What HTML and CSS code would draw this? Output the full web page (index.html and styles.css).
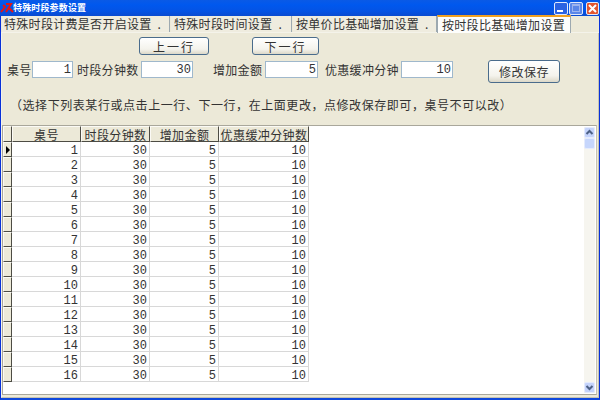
FILE: index.html
```html
<!DOCTYPE html>
<html lang="zh">
<head>
<meta charset="utf-8">
<title>特殊时段参数设置</title>
<link rel="stylesheet" href="styles.css">
</head>
<body>
<div class="window">
  <div class="titlebar">
    <svg class="appicon" width="14" height="14" viewBox="0 0 14 14"><path d="M1 11 L5 6 L3 4 M6 3 L11 3 L6 11 M9 7 L13 11" fill="none" stroke="#e01818" stroke-width="2"/></svg>
    <span class="title">特殊时段参数设置</span>
    <div class="wbtns">
      <span class="wbtn min"><svg width="12" height="12" viewBox="0 0 12 12"><rect x="2" y="8" width="6" height="2" fill="#fff"/></svg></span>
      <span class="wbtn off"><svg width="12" height="12" viewBox="0 0 12 12"><rect x="2.5" y="2.5" width="7" height="7" fill="none" stroke="#9db4ee"/><rect x="2" y="2" width="8" height="2" fill="#9db4ee"/></svg></span>
      <span class="wbtn close"><svg width="11" height="11" viewBox="0 0 11 11"><path d="M2 2 L9 9 M9 2 L2 9" stroke="#fff" stroke-width="2"/></svg></span>
    </div>
  </div>
  <div class="tabs">
    <span class="tab t1">特殊时段计费是否开启设置 .</span>
    <span class="tab t2">特殊时段时间设置 .</span>
    <span class="tab t3">按单价比基础增加设置 .</span>
    <span class="tab active">按时段比基础增加设置</span>
  </div>
  <div class="panel">
    <div class="navrow">
      <button class="btn prev">上一行</button>
      <button class="btn next">下一行</button>
    </div>
    <div class="fields">
      <label class="lbl l1">桌号</label><span class="inp i1">1</span>
      <label class="lbl l2">时段分钟数</label><span class="inp i2">30</span>
      <label class="lbl l3">增加金额</label><span class="inp i3">5</span>
      <label class="lbl l4">优惠缓冲分钟</label><span class="inp i4">10</span>
      <button class="btn save">修改保存</button>
    </div>
    <p class="note">（选择下列表某行或点击上一行、下一行，在上面更改，点修改保存即可，桌号不可以改）</p>
    <div class="grid">
      <div class="gridbody">
        <table>
          <thead><tr><th class="ind"></th><th class="c1">桌号</th><th class="c2">时段分钟数</th><th class="c3">增加金额</th><th class="c4">优惠缓冲分钟数</th></tr></thead>
          <tbody>
            <tr><td class="ind cur"></td><td>1</td><td>30</td><td>5</td><td>10</td></tr>
            <tr><td class="ind"></td><td>2</td><td>30</td><td>5</td><td>10</td></tr>
            <tr><td class="ind"></td><td>3</td><td>30</td><td>5</td><td>10</td></tr>
            <tr><td class="ind"></td><td>4</td><td>30</td><td>5</td><td>10</td></tr>
            <tr><td class="ind"></td><td>5</td><td>30</td><td>5</td><td>10</td></tr>
            <tr><td class="ind"></td><td>6</td><td>30</td><td>5</td><td>10</td></tr>
            <tr><td class="ind"></td><td>7</td><td>30</td><td>5</td><td>10</td></tr>
            <tr><td class="ind"></td><td>8</td><td>30</td><td>5</td><td>10</td></tr>
            <tr><td class="ind"></td><td>9</td><td>30</td><td>5</td><td>10</td></tr>
            <tr><td class="ind"></td><td>10</td><td>30</td><td>5</td><td>10</td></tr>
            <tr><td class="ind"></td><td>11</td><td>30</td><td>5</td><td>10</td></tr>
            <tr><td class="ind"></td><td>12</td><td>30</td><td>5</td><td>10</td></tr>
            <tr><td class="ind"></td><td>13</td><td>30</td><td>5</td><td>10</td></tr>
            <tr><td class="ind"></td><td>14</td><td>30</td><td>5</td><td>10</td></tr>
            <tr><td class="ind"></td><td>15</td><td>30</td><td>5</td><td>10</td></tr>
            <tr><td class="ind"></td><td>16</td><td>30</td><td>5</td><td>10</td></tr>
          </tbody>
        </table>
      </div>
      <div class="scrollbar">
        <span class="sbtn"><svg width="9" height="9" viewBox="0 0 9 9"><path d="M1.5 6 L4.5 3 L7.5 6" fill="none" stroke="#4d6185" stroke-width="2"/></svg></span>
        <span class="thumb"></span>
        <span class="track"></span>
        <span class="sbtn"><svg width="9" height="9" viewBox="0 0 9 9"><path d="M1.5 3 L4.5 6 L7.5 3" fill="none" stroke="#4d6185" stroke-width="2"/></svg></span>
      </div>
    </div>
  </div>
</div>
</body>
</html>
```
FILE: styles.css
```css
* { box-sizing: border-box; }
html, body { margin: 0; padding: 0; }
body { width: 600px; height: 400px; overflow: hidden; font-family: "Noto Sans CJK SC", "Liberation Sans", sans-serif; font-size: 12px; color: #333; }
.window { width: 600px; height: 400px; display: flex; flex-direction: column; background: #ece9d8; border-left: 1px solid #0831d9; border-right: 1px solid #0831d9; border-bottom: 2px solid #0f48dc; }
.titlebar { height: 16px; flex: none; margin: 0 -1px; display: flex; align-items: center; background: linear-gradient(#0a5ae6, #0058ee 30%, #0453e4 70%, #0a4bd0); }
.appicon { flex: none; }
.title { margin-left: -1px; color: #fff; font-size: 9px; font-weight: 700; line-height: 16px; letter-spacing: 0.15px; }
.wbtns { margin-left: auto; margin-right: 1px; display: flex; align-items: center; gap: 1px; }
.wbtn { width: 14px; height: 13px; border: 1px solid #dfe8fb; border-radius: 2px; background: #2a62e2; display: flex; align-items: center; justify-content: center; }
.wbtn.off { background: #5a86e8; width: 14px; margin-right: 2px; }
.wbtn.close { background: #e2552f; width: 13px; }
.tabs { height: 17px; flex: none; display: flex; align-items: flex-end; padding-left: 1px; background: #ece9d8; border-bottom: 1px solid #f4f3ea; }
.tab { height: 16px; font-size: 12px; line-height: 16px; white-space: nowrap; background: #efecdf; border-right: 1px solid #9da9b0; color: #333; letter-spacing: 0.3px; word-spacing: 3px; padding-left: 2px; }
.t1 { width: 168px; }
.t2 { width: 121px; margin-left: 1px; padding-left: 3px; }
.t3 { width: 144px; margin-left: 1px; padding-left: 3px; }
.tab.active { width: 134px; height: 18px; margin-bottom: -1px; margin-left: 0; background: #fdfdfb; border: 1px solid #9da9b0; border-top: 2px solid #f0a020; border-bottom: 0; line-height: 16px; padding-left: 4px; }
.panel { flex: 1; min-height: 0; display: flex; flex-direction: column; padding: 4px 1px 2px 0; border: 1px solid #c6c3b4; border-top: 0; border-left-color: #f4f3ea; }
.navrow { display: flex; height: 18px; flex: none; padding-left: 137px; gap: 43px; }
.btn { padding: 0; font: inherit; color: #333; border: 1px solid #4a6c8c; border-radius: 3px; background: linear-gradient(#fff, #f4f3ec 70%, #dcd8c8); }
.prev, .next { width: 70px; height: 18px; letter-spacing: 2px; }
.next { width: 67px; }
.fields { flex: none; display: flex; align-items: flex-start; margin-top: 6px; height: 23px; }
.lbl { line-height: 18px; height: 17px; white-space: nowrap; letter-spacing: 0.3px; }
.inp { height: 17px; border: 1px solid #9fb8cc; background: #fff; text-align: right; padding-right: 1px; line-height: 16px; font-family: "Liberation Mono", monospace; flex: none; }
.l1 { margin-left: 5px; width: 25px; }
.i1 { width: 41px; }
.l2 { margin-left: 4px; width: 64px; }
.i2 { width: 52px; }
.l3 { margin-left: 20px; width: 52px; }
.i3 { width: 53px; }
.l4 { margin-left: 7px; width: 76px; }
.i4 { width: 52px; }
.save { margin-left: 35px; margin-top: -1px; width: 72px; height: 23px; letter-spacing: 0.5px; }
.note { margin: 12px 0 0; flex: none; padding-left: 8px; height: 29px; line-height: 17px; white-space: nowrap; letter-spacing: 0.56px; }
.grid { flex: 1; min-height: 0; display: flex; background: #fff; border: 1px solid #a9a79b; border-right-color: #c6c3b4; }
.gridbody { flex: 1; min-width: 0; }
table { border-collapse: separate; border-spacing: 0; table-layout: fixed; width: 306px; }
th { height: 16px; padding: 0; font-weight: 400; background: #ece9d8; border-right: 1px solid #4d4c44; border-bottom: 1px solid #4d4c44; border-left: 1px solid #fbfaf5; border-top: 1px solid #fbfaf5; line-height: 13px; white-space: nowrap; letter-spacing: 0.4px; overflow: hidden; }
td { height: 15px; padding: 4px 2px 0 0; text-align: right; border-right: 1px solid #d8d8d8; border-bottom: 1px solid #d8d8d8; line-height: 10px; font-family: "Liberation Mono", monospace; }
th.ind { width: 9px; }
.c1 { width: 69px; }
.c2 { width: 69px; }
.c3 { width: 69px; }
.c4 { width: 90px; }
td.ind { background: #ece9d8; border-right: 1px solid #4d4c44; border-bottom: 1px solid #4d4c44; border-left: 1px solid #fbfaf5; border-top: 1px solid #fbfaf5; padding: 0; }
td.cur { position: relative; }
td.cur::after { content: ""; position: absolute; left: 2px; top: 3px; border-left: 4px solid #000; border-top: 4px solid transparent; border-bottom: 4px solid transparent; }
.scrollbar { width: 11px; flex: none; margin: 1px 1px 1px 0; display: flex; flex-direction: column; background: #f6f5ef; }
.sbtn { height: 11px; flex: none; background: #c4d3fb; border: 1px solid #e4ebfd; border-radius: 2px; display: flex; align-items: center; justify-content: center; }
.thumb { height: 11px; flex: none; background: #c6d6fc; border: 1px solid #e4ebfd; border-radius: 2px; }
.track { flex: 1; }
```
